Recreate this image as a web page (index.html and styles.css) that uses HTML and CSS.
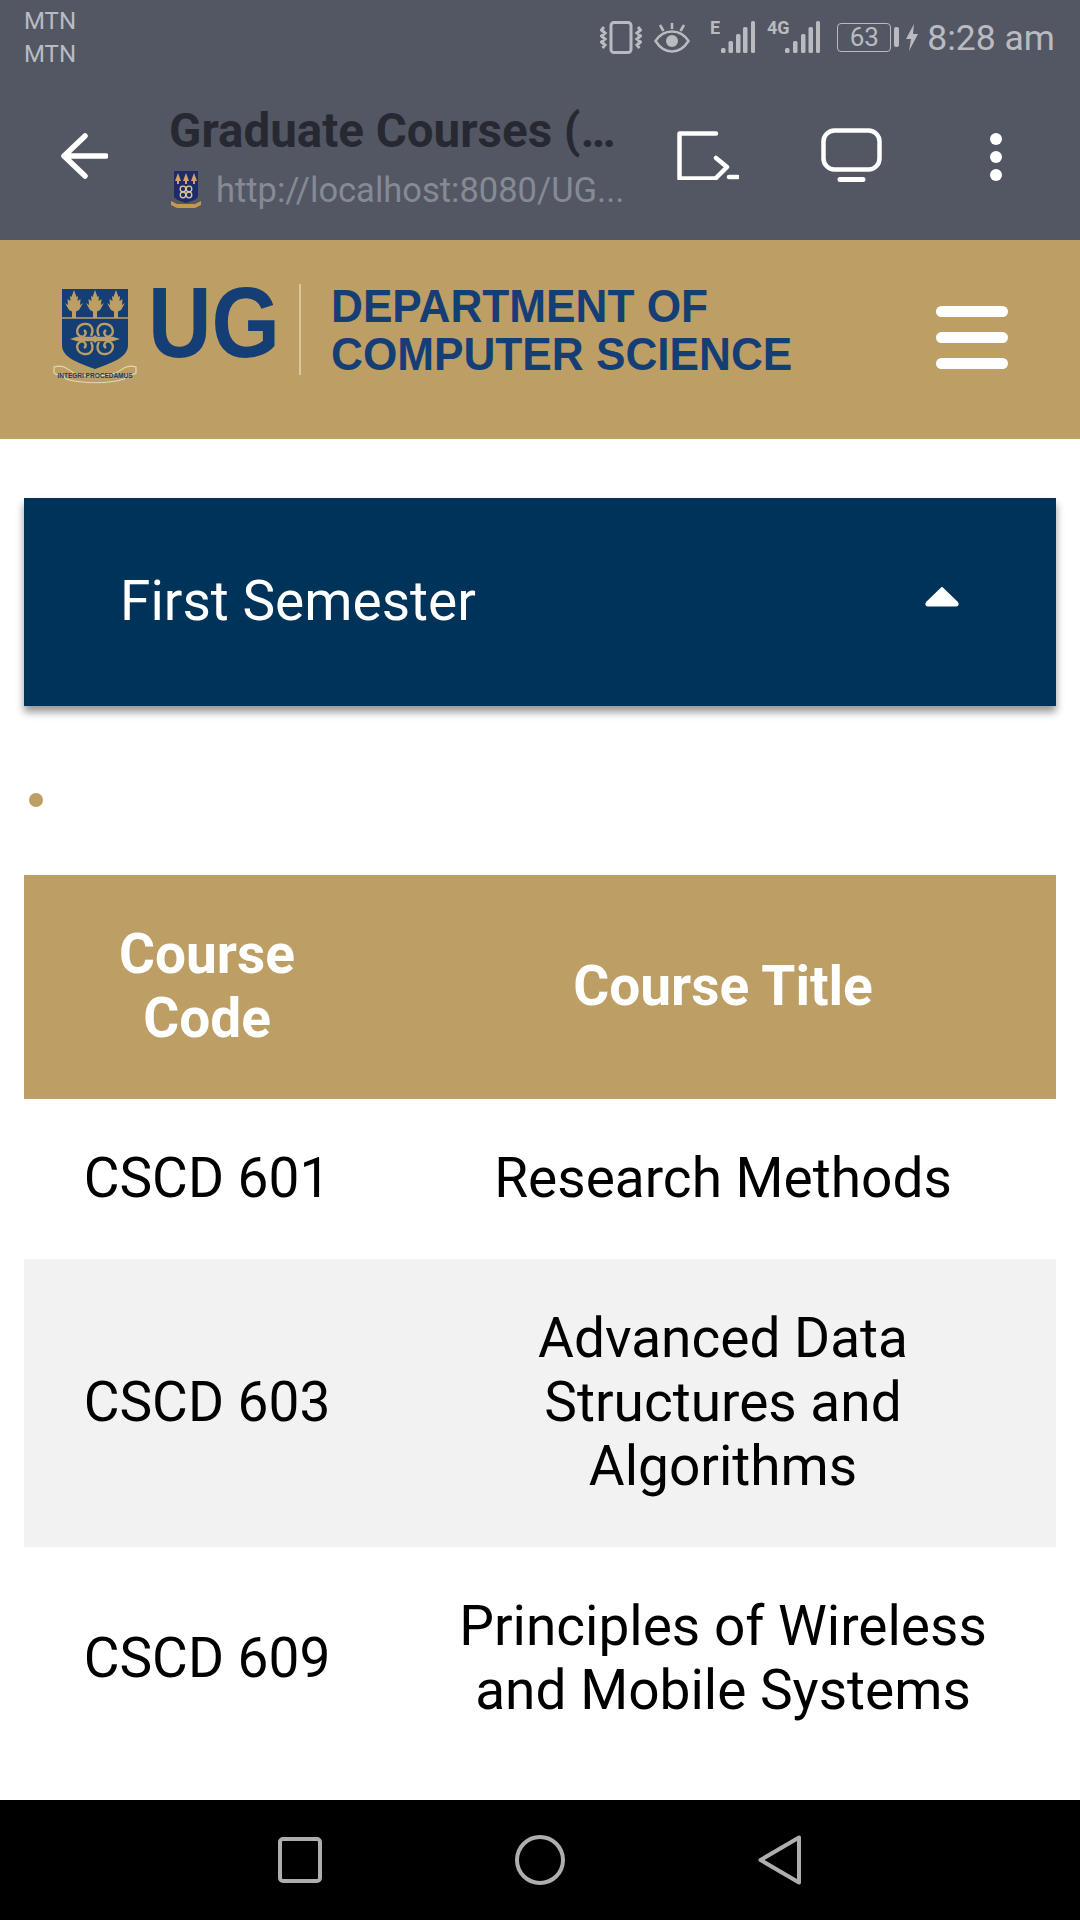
FILE: index.html
```html
<!DOCTYPE html>
<html lang="en">
<head>
<meta charset="utf-8">
<title>Graduate Courses</title>
<link rel="stylesheet" href="styles.css">
</head>
<body>
<div class="screen">
  <header class="chrome">
    <div class="status">
      <div class="carriers"><span>MTN</span><span>MTN</span></div>
      <div class="status-icons">
        <svg class="i-vib" viewBox="0 0 42 33" width="42" height="33"><rect x="11" y="1.500" width="20" height="30" rx="3" fill="none" stroke="#b9bbc1" stroke-width="3"/><path d="M4 6l-2.500 3 3.500 3-3.500 3 3.500 3-3.500 3 3.500 3-2.500 3M38 6l2.500 3-3.500 3 3.500 3-3.500 3 3.500 3-3.500 3 2.500 3" fill="none" stroke="#b9bbc1" stroke-width="3"/></svg>
        <svg class="i-eye" viewBox="0 0 36 31" width="36" height="31"><path d="M1.500 19C6 12 11 9.500 18 9.500S30 12 34.500 19C30 26 25 29.500 18 29.500S6 26 1.500 19Z" fill="none" stroke="#b9bbc1" stroke-width="2.500"/><circle cx="18" cy="19" r="6" fill="#b9bbc1"/><path d="M18 1v6M6 3l3.500 6M30 3l-3.500 6" stroke="#b9bbc1" stroke-width="2.500" fill="none"/></svg>
        <svg class="i-sig1" viewBox="0 -4 46 38" width="46" height="38"><text x="0" y="14" class="sig-label">E</text><rect x="11" y="28" width="4.500" height="5" rx="1.500"/><rect x="18.500" y="21" width="4.500" height="12" rx="1.500"/><rect x="26" y="14" width="4.500" height="19" rx="1.500"/><rect x="33" y="7" width="4.500" height="26" rx="1.500"/><rect x="41" y="1" width="4" height="32" rx="1.500"/></svg>
        <svg class="i-sig2" viewBox="0 -4 54 38" width="54" height="38"><text x="0" y="14" class="sig-label">4G</text><rect x="18" y="28" width="4.500" height="5" rx="1.500"/><rect x="26" y="21" width="4.500" height="12" rx="1.500"/><rect x="34" y="14" width="4.500" height="19" rx="1.500"/><rect x="41.500" y="7" width="4.500" height="26" rx="1.500"/><rect x="49" y="1" width="4" height="32" rx="1.500"/></svg>
        <div class="battery"><span class="battery-body">63</span><span class="battery-nub"></span></div>
        <svg class="i-bolt" viewBox="0 0 12 27" width="12" height="27"><path d="M8 0L0 15h5l-2 12L12 10H7Z" fill="#b9bbc1"/></svg>
        <span class="clock">8:28 am</span>
      </div>
    </div>
    <div class="toolbar">
      <svg class="i-back" viewBox="0 0 47 46" width="47" height="46"><path d="M45 23H4M24 3L3 23l21 20" fill="none" stroke="#fff" stroke-width="5.500" stroke-linecap="round" stroke-linejoin="round"/></svg>
      <div class="titles">
        <div class="page-title">Graduate Courses (…</div>
        <div class="page-url">
          <svg class="favicon" viewBox="0 0 30 37" width="30" height="37">
            <path d="M3 0h24v25c0 3-6 5-12 7-6-2-12-4-12-7Z" fill="#1f2a68"/>
            <path d="M7 2l3 8h-2v3H6v-3H4ZM15 2l3 8h-2v3h-2v-3h-2ZM23 2l3 8h-2v3h-2v-3h-2Z" fill="#d0a35f"/>
            <g fill="none" stroke="#dcc6a0" stroke-width="1.300"><circle cx="12" cy="18" r="2.800"/><circle cx="18" cy="18" r="2.800"/><circle cx="12" cy="24" r="2.800"/><circle cx="18" cy="24" r="2.800"/></g>
            <path d="M0 30l6 3h18l6-3v4l-6 3H6l-6-3Z" fill="#c7974f"/>
          </svg>
          <span class="url-text">http://localhost:8080/UG...</span>
        </div>
      </div>
      <svg class="i-cast" viewBox="0 0 62 49" width="62" height="49"><path d="M39 2.500H2.500v45h36L50 36 39 27M52 46h9" fill="none" stroke="#fff" stroke-width="4.500" stroke-linecap="round" stroke-linejoin="round"/></svg>
      <svg class="i-tv" viewBox="0 0 61 54" width="61" height="54"><rect x="2.500" y="2.500" width="56" height="39" rx="11" fill="none" stroke="#fff" stroke-width="4.500"/><path d="M19 51.500h23" stroke="#fff" stroke-width="5" stroke-linecap="round"/></svg>
      <svg class="i-more" viewBox="0 0 12 48" width="12" height="48"><circle cx="6" cy="6" r="6" fill="#fff"/><circle cx="6" cy="24" r="6" fill="#fff"/><circle cx="6" cy="42" r="6" fill="#fff"/></svg>
    </div>
  </header>

  <div class="site-head">
    <div class="brand">
      <svg class="crest" viewBox="0 0 84 98" width="84" height="98">
        <path d="M9 2h66v56c0 12-14 17-33 24C23 75 9 70 9 58Z" fill="#153e75"/>
        <path d="M9 31h66" stroke="#bd9f65" stroke-width="1.500"/>
        <g fill="#bd9f65">
          <path d="M21 3l2.500 7 1.500-1-.5 5 3-2-.5 6 3-2-4 7-3 1.500V31h-4v-6.500l-3-1.500-4-7 3 2-.5-6 3 2-.5-5 1.500 1Z"/>
          <path d="M42 3l2.500 7 1.500-1-.5 5 3-2-.5 6 3-2-4 7-3 1.500V31h-4v-6.500l-3-1.500-4-7 3 2-.5-6 3 2-.5-5 1.500 1Z"/>
          <path d="M63 3l2.500 7 1.500-1-.5 5 3-2-.5 6 3-2-4 7-3 1.500V31h-4v-6.500l-3-1.500-4-7 3 2-.5-6 3 2-.5-5 1.500 1Z"/>
          <path d="M17 52l7-2.200h36l7 2.200-7 2.200H24Z"/>
          <path d="M42 48l4 4-4 4-4-4Z"/>
        </g>
        <g fill="none" stroke="#bd9f65" stroke-width="2.300">
          <path d="M38 49c4-8-1-13-7-12-7 1-9 9-4 12 4 2 8-3 4-6"/>
          <path d="M46 49c-4-8 1-13 7-12 7 1 9 9 4 12-4 2-8-3-4-6"/>
          <path d="M38 55c4 8-1 13-7 12-7-1-9-9-4-12 4-2 8 3 4 6"/>
          <path d="M46 55c-4 8 1 13 7 12 7-1 9-9 4-12-4-2-8 3-4 6"/>
        </g>
        <path d="M1 80c10-3 14 3 20 6 14 4 28 4 42 0 6-3 10-9 20-6v6c-3 2-6 2-8 1l-4 5c-16 5-40 5-58 0l-4-5c-2 1-5 1-8-1Z" fill="#bd9f65" stroke="#e3d7bc" stroke-width="1.200"/>
        <text x="42" y="91" class="motto" text-anchor="middle">INTEGRI PROCEDAMUS</text>
      </svg>
      <span class="ug">UG</span>
      <span class="brand-rule"></span>
      <div class="dept"><span>DEPARTMENT OF</span><span>COMPUTER SCIENCE</span></div>
    </div>
    <div class="burger"><span></span><span></span><span></span></div>
  </div>

  <main class="content">
    <div class="accordion">
      <span class="accordion-title">First Semester</span>
      <svg class="caret" viewBox="0 0 36 21" width="36" height="21"><path d="M18 2L33 16.500c1.500 2 .5 3-1.500 3h-27c-2 0-3-1-1.500-3Z" fill="#fff" stroke="#fff" stroke-width="2" stroke-linejoin="round"/></svg>
    </div>
    <div class="bullet-row"><span class="bullet"></span></div>
    <table class="courses">
      <thead>
        <tr><th class="col-code">Course Code</th><th>Course Title</th></tr>
      </thead>
      <tbody>
        <tr><td>CSCD 601</td><td>Research Methods</td></tr>
        <tr class="alt"><td>CSCD 603</td><td>Advanced Data Structures and Algorithms</td></tr>
        <tr><td>CSCD 609</td><td>Principles of Wireless and Mobile Systems</td></tr>
      </tbody>
    </table>
  </main>

  <nav class="navbar">
    <svg viewBox="0 0 44 46" width="44" height="46"><rect x="2" y="2" width="40" height="42" rx="3" fill="none" stroke="#aeaeae" stroke-width="4"/></svg>
    <svg viewBox="0 0 50 50" width="50" height="50"><circle cx="25" cy="25" r="23" fill="none" stroke="#aeaeae" stroke-width="4"/></svg>
    <svg viewBox="0 0 44 50" width="44" height="50"><path d="M41 2.500L2.500 25 41 47.500Z" fill="none" stroke="#aeaeae" stroke-width="4" stroke-linejoin="round"/></svg>
  </nav>
</div>
</body>
</html>
```

FILE: styles.css
```css
* { box-sizing: border-box; }
html, body { margin: 0; padding: 0; }
body { font-family: Roboto, "Liberation Sans", sans-serif; background: #fff; }

.screen { width: 1080px; height: 1920px; display: flex; flex-direction: column; overflow: hidden; }

.chrome { height: 240px; background: #535763; display: flex; flex-direction: column; flex: none; }
.status { height: 73px; padding: 5px 25px 0 24px; display: flex; justify-content: space-between; color: #b9bbc1; }
.carriers { display: flex; flex-direction: column; font-size: 24px; line-height: 33px; }
.status-icons { display: flex; align-items: center; height: 66px; margin-top: -1px; }
.i-vib { margin-right: 12px; }
.i-eye { margin-right: 20px; }
.i-sig1 { margin-right: 11px; margin-top: -4px; }
.i-sig2 { margin-right: 16px; margin-top: -4px; }
.sig-label { font: 700 18px "Roboto", sans-serif; fill: #b9bbc1; }
.i-sig1 rect, .i-sig2 rect { fill: #b9bbc1; }
.battery { display: flex; align-items: center; margin-right: 7px; }
.battery-body { width: 54px; height: 29px; border: 1.500px solid #b9bbc1; border-radius: 4px; font-size: 26px; line-height: 26px; text-align: center; }
.battery-nub { width: 5px; height: 20px; margin-left: 3px; border-radius: 2px; background: #b9bbc1; }
.i-bolt { margin-right: 9px; }
.clock { font-size: 35.500px; line-height: 40px; margin-top: 2px; }

.toolbar { flex: 1; display: flex; align-items: center; padding: 0 78px 0 61px; }
.i-back { margin-top: -2px; margin-right: 61px; flex: none; }
.titles { width: 501px; flex: none; display: flex; flex-direction: column; }
.page-title { font-size: 47.500px; line-height: 52px; font-weight: 700; color: #272932; white-space: nowrap; margin-top: 1px; }
.page-url { display: flex; align-items: center; gap: 15px; margin-top: 13px; padding-left: 2px; height: 40px; color: #868a94; }
.favicon { flex: none; }
.url-text { font-size: 34.500px; line-height: 40px; white-space: nowrap; }
.i-cast { margin-left: 7px; margin-top: -2px; flex: none; }
.i-tv { margin-left: 82px; margin-top: -4px; flex: none; }
.i-more { margin-left: 108px; flex: none; }

.site-head { height: 199px; background: #bd9f65; flex: none; display: flex; align-items: center; justify-content: space-between; padding: 0 72px 0 53px; }
.brand { display: flex; align-items: center; height: 100px; margin-top: -20px; }
.crest { flex: none; margin-top: 13px; }
.motto { font: 700 6.500px "Liberation Sans", sans-serif; fill: #153e75; }
.ug { font: 700 100px/100px "Liberation Sans", sans-serif; color: #153e75; margin: 0 -18px 15px 11px; transform: scaleX(.88); transform-origin: left center; }
.brand-rule { width: 2px; height: 91px; background: #d8c8a2; margin-left: 19px; }
.dept { display: flex; flex-direction: column; margin-left: 30px; font: 700 46px/48px "Liberation Sans", sans-serif; color: #153e75; white-space: nowrap; transform: scaleX(.96); transform-origin: left center; }
.burger { display: flex; flex-direction: column; gap: 15px; margin-top: -5px; }
.burger span { display: block; width: 72px; height: 11px; border-radius: 6px; background: #fff; }

.content { flex: 1; padding: 59px 24px 0; overflow: hidden; }
.accordion { height: 208px; background: #00335a; box-shadow: 0 6px 8px rgba(0,0,0,.42); display: flex; align-items: center; justify-content: space-between; padding: 0 96px 0 96px; }
.accordion-title { font-size: 55px; line-height: 64px; color: #fff; margin-top: -2px; }
.caret { margin-top: -12px; }
.bullet-row { height: 169px; display: flex; align-items: center; padding: 18px 0 0 5px; }
.bullet { width: 14px; height: 14px; border-radius: 50%; background: #bd9f65; }

.courses { width: 1032px; border-collapse: collapse; table-layout: fixed; font-size: 55px; line-height: 64px; }
.courses th, .courses td { padding: 47px 24px 49px; text-align: center; font-weight: 400; }
.courses th { background: #bd9f65; color: #fff; font-weight: 700; }
.courses .col-code { width: 366px; padding-left: 72px; padding-right: 72px; }
.courses td { color: #000; }
.courses .alt td { background: #f2f2f2; }

.navbar { height: 120px; flex: none; background: #000; display: flex; align-items: center; justify-content: center; }
.navbar svg:nth-child(1), .navbar svg:nth-child(2) { margin-right: 193px; }
```
